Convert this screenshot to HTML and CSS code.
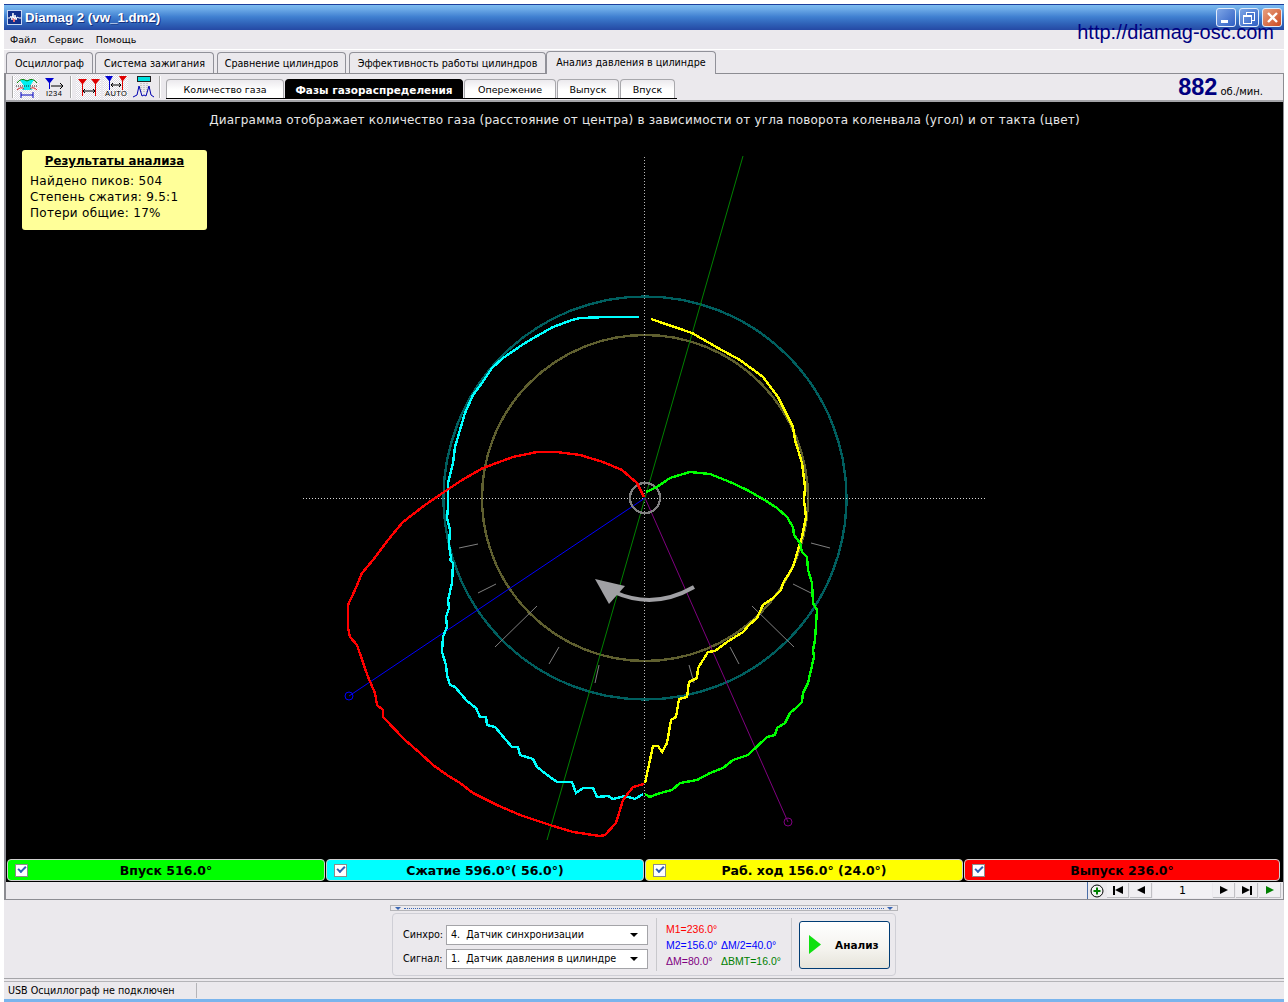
FILE: index.html
```html
<!DOCTYPE html>
<html lang="ru">
<head>
    <meta charset="UTF-8">
    <title>Diamag 2 (vw_1.dm2)</title>
    <link rel="stylesheet" href="styles.css">
</head>
<body>
<div class="window">

    <!-- title bar -->
    <div class="titlebar">
        <svg class="app-icon" width="15" height="15" viewBox="0 0 15 15">
            <rect x="0.5" y="0.5" width="14" height="14" fill="#12308c" stroke="#c8d8f4"/>
            <polyline points="1,8 3,8 4,6 5,10 6,3 7,12 8,5 9,10 10,7 12,8 14,8" fill="none" stroke="#fff"/>
            <polyline points="6,8 7,12 8,9" fill="none" stroke="#f06060"/>
        </svg>
        <span class="app-title">Diamag 2 (vw_1.dm2)</span>
        <div class="win-buttons">
            <div class="win-btn"><span class="glyph-min"></span></div>
            <div class="win-btn"><span class="glyph-restore"></span></div>
            <div class="win-btn win-close">
                <svg width="13" height="13" viewBox="0 0 13 13"><path d="M2 2 L11 11 M11 2 L2 11" stroke="#fff" stroke-width="2.4"/></svg>
            </div>
        </div>
    </div>
    <a class="site-link">http://diamag-osc.com</a>

    <!-- menu -->
    <div class="menu">
        <span>Файл</span>
        <span>Сервис</span>
        <span>Помощь</span>
    </div>

    <!-- main tabs -->
    <div class="tabs">
        <div class="tab">Осциллограф</div>
        <div class="tab tab-second">Система зажигания</div>
        <div class="tab">Сравнение цилиндров</div>
        <div class="tab">Эффективность работы цилиндров</div>
        <div class="tab tab-active">Анализ давления в цилиндре</div>
    </div>

    <div class="pane">
        <!-- toolbar -->
        <div class="toolbar">
            <div class="tool-sep"></div>
            <div class="tool-btn tool-pressed tool-first">
                <svg width="24" height="24" viewBox="0 0 24 24">
                    <path d="M5 5 H19 L15 11 L17 15 H7 L9 11 Z" fill="#00f0f0"/>
                    <path d="M2 8 Q6 2 12 6 Q18 2 22 8" fill="none" stroke="#008000"/>
                    <path d="M1 11 H23" stroke="#202020" stroke-dasharray="1 1"/>
                    <path d="M2 15 Q6 11 9 14 M15 14 Q18 11 22 15" fill="none" stroke="#e02020"/>
                    <path d="M6 20 H18 M6 17 V23 M18 17 V23" stroke="#0000c0" fill="none"/>
                </svg>
            </div>
            <div class="tool-btn tool-wide">
                <svg width="24" height="24" viewBox="0 0 24 24">
                    <path d="M3 3 H12 L8 8 V14 H7 V8 Z" fill="#0000d0"/>
                    <path d="M9 11 H21 M18 8 L21 11 L18 14" stroke="#000" fill="none"/>
                    <text x="4" y="21" class="tool-text">I234</text>
                </svg>
            </div>
            <div class="tool-sep tool-sep-mid"></div>
            <div class="tool-btn tool-pressed">
                <svg width="24" height="24" viewBox="0 0 24 24">
                    <path d="M1 4 H10 L6 9 V21 H5 V9 Z M14 4 H23 L19 9 V21 H18 V9 Z" fill="#e00000"/>
                    <path d="M6 16 H18" stroke="#000"/>
                    <path d="M8 14 L6 16 L8 18 M16 14 L18 16 L16 18" stroke="#000" fill="none"/>
                </svg>
            </div>
            <div class="tool-btn tool-pressed">
                <svg width="24" height="24" viewBox="0 0 24 24">
                    <path d="M1 1 H9 L6 6 V15 H5 V6 Z" fill="#0000d0"/>
                    <path d="M15 1 H23 L19 6 V15 H18 V6 Z" fill="#e00000"/>
                    <path d="M7 10 H17 M9 8 L7 10 L9 12 M15 8 L17 10 L15 12" stroke="#000" fill="none"/>
                    <text x="1" y="21" class="tool-text">AUTO</text>
                </svg>
            </div>
            <div class="tool-btn">
                <svg width="24" height="24" viewBox="0 0 24 24">
                    <rect x="6.5" y="1.5" width="13" height="5" fill="#00e0e0" stroke="#202020"/>
                    <path d="M10 8 V18 M13 8 V18 M16 8 V18" stroke="#a0a0a0" stroke-dasharray="1 1"/>
                    <path d="M2 22 L6 20 L8 11 L11 21 L13 20 L15 21 L18 11 L20 20 L23 22" fill="none" stroke="#0000b0"/>
                </svg>
            </div>
            <div class="tool-sep tool-sep-end"></div>
            <div class="subtabs">
                <div class="subtab">Количество газа</div>
                <div class="subtab subtab-active">Фазы газораспределения</div>
                <div class="subtab">Опережение</div>
                <div class="subtab">Выпуск</div>
                <div class="subtab">Впуск</div>
            </div>
            <div class="rpm"><b>882</b><span>об./мин.</span></div>
        </div>

        <!-- chart -->
        <div class="chart">
            <svg class="chart-svg" width="1277" height="755" viewBox="6 102 1277 755">
                <g fill="none" stroke-width="2.4" shape-rendering="crispEdges">
                    <circle cx="645" cy="498" r="201.5" stroke="#005f5f"/>
                    <circle cx="645" cy="498" r="163" stroke="#5f5f2f"/>
                </g>
                <g stroke="#808080" stroke-width="1">
                    <line x1="459" y1="548" x2="478" y2="544"/>
                    <line x1="478" y1="593" x2="496" y2="584"/>
                    <line x1="495" y1="647" x2="537" y2="606"/>
                    <line x1="549" y1="664" x2="559" y2="647"/>
                    <line x1="595" y1="683" x2="599" y2="665"/>
                    <line x1="689" y1="665" x2="694" y2="683"/>
                    <line x1="730" y1="647" x2="739" y2="664"/>
                    <line x1="752" y1="606" x2="794" y2="647"/>
                    <line x1="793" y1="584" x2="811" y2="593"/>
                    <line x1="811" y1="543" x2="830" y2="548"/>
                </g>
                <g stroke-dasharray="1 2">
                    <line x1="303" y1="498.5" x2="985" y2="498.5" stroke="#d8d8d8"/>
                    <line x1="644.5" y1="157" x2="644.5" y2="840" stroke="#b8b8b8"/>
                </g>
                <g fill="none" stroke-width="1">
                    <line x1="743" y1="156" x2="547" y2="840" stroke="#008000"/>
                    <line x1="645" y1="498" x2="349" y2="696" stroke="#0000ff"/>
                    <circle cx="349" cy="696" r="4" stroke="#0000ff"/>
                    <line x1="645" y1="498" x2="788" y2="822" stroke="#800080"/>
                    <circle cx="788" cy="822" r="4" stroke="#800080"/>
                </g>
                <circle cx="645" cy="498" r="15" fill="none" stroke="#808080" stroke-width="2.4" shape-rendering="crispEdges"/>

                <!-- rotation arrow -->
                <path d="M694 587 Q654 610 614 592" fill="none" stroke="#a0a0a4" stroke-width="4"/>
                <polygon points="595,579 625,586 609,604" fill="#a0a0a4"/>

                <!-- stroke curves -->
                <g fill="none" stroke-width="2.4" shape-rendering="crispEdges">
                    <polyline stroke="#00ffff" points="639,317 608,317 580,318 572,320 553,327 537,336 522,345 503,358 492,368 482,383 473,395 465,413 460,430 455,447 453,463 448,483 448,507 447,518 450,530 449,545 451,558 450,560 453,563 452,583 448,600 449,608 446,617 447,627 443,637 442,652 446,665 447,675 450,685 455,687 467,701 476,708 480,717 486,717 487,725 495,727 512,747 518,747 520,755 533,759 537,767 550,777 557,782 572,782 576,793 583,788 593,788 597,797 608,796 613,799 625,796 635,799 643,794"/>
                    <polyline stroke="#ffff00" points="651,319 692,333 718,348 740,360 763,377 778,397 793,427 795,440 802,463 805,487 804,500 806,517 802,537 799,547 800,543 793,567 790,572 783,583 781,590 773,598 763,605 757,618 749,625 743,632 727,642 715,651 708,652 698,668 697,678 689,682 687,697 679,699 676,717 671,720 667,743 662,752 658,746 653,746 645,783"/>
                    <polyline stroke="#00ff00" points="646,492 657,487 670,478 690,472 710,474 730,482 747,490 763,499 777,508 787,517 793,527 794,535 800,543 802,552 807,557 808,570 812,583 813,603 817,610 815,640 813,650 814,657 808,683 803,693 802,702 797,707 790,713 785,723 777,728 775,735 767,737 748,755 733,760 723,768 710,773 697,780 680,783 672,790 657,794 650,797 645,794"/>
                    <polyline stroke="#ff0000" points="644,497 637,483 622,470 603,462 580,455 557,452 537,452 513,457 483,468 462,480 447,490 425,505 403,522 392,535 382,548 373,560 362,573 355,590 348,605 348,628 350,637 357,645 368,677 375,693 377,705 383,710 383,717 405,740 420,753 433,765 447,775 460,783 473,793 497,805 520,815 550,825 573,832 600,836 605,835 616,823 623,800 633,787 644,784"/>
                </g>
            </svg>

            <div class="chart-caption">Диаграмма отображает количество газа (расстояние от центра) в зависимости от угла поворота коленвала (угол) и от такта (цвет)</div>

            <div class="results">
                <div class="results-title">Результаты анализа</div>
                <div>Найдено пиков: 504</div>
                <div>Степень сжатия: 9.5:1</div>
                <div>Потери общие: 17%</div>
            </div>
        </div>

        <!-- stroke chips -->
        <div class="chips">
            <div class="chip chip-green"><span class="check"></span><span>Впуск 516.0°</span></div>
            <div class="chip chip-cyan"><span class="check"></span><span>Сжатие 596.0°( 56.0°)</span></div>
            <div class="chip chip-yellow"><span class="check"></span><span>Раб. ход 156.0° (24.0°)</span></div>
            <div class="chip chip-red"><span class="check"></span><span>Выпуск 236.0°</span></div>
        </div>

        <!-- frame navigation -->
        <div class="nav">
            <div class="nav-plus">
                <svg width="14" height="14" viewBox="0 0 14 14">
                    <circle cx="7" cy="7" r="6" fill="#f4f4f4" stroke="#000"/>
                    <path d="M3.5 7 H10.5 M7 3.5 V10.5" stroke="#008000" stroke-width="2"/>
                </svg>
            </div>
            <div class="nav-btn"><span class="bar"></span><span class="tri-left"></span></div>
            <div class="nav-btn"><span class="tri-left"></span></div>
            <div class="nav-num">1</div>
            <div class="nav-btn"><span class="tri-right"></span></div>
            <div class="nav-btn"><span class="tri-right"></span><span class="bar"></span></div>
            <div class="nav-btn"><span class="tri-right tri-green"></span></div>
        </div>
    </div>

    <!-- bottom panel -->
    <div class="bottom">
        <div class="splitter"><span class="split-tri"></span><span class="split-dots"></span><span class="split-tri"></span></div>
        <div class="panel">
            <div class="combos">
                <div class="combo-row">
                    <label>Синхро:</label>
                    <div class="combo"><span>4.&nbsp; Датчик синхронизации</span><i></i></div>
                </div>
                <div class="combo-row">
                    <label>Сигнал:</label>
                    <div class="combo"><span>1.&nbsp; Датчик давления в цилиндре</span><i></i></div>
                </div>
            </div>
            <div class="readout">
                <span class="c-red">M1=236.0°</span><span></span>
                <span class="c-blue">M2=156.0°</span><span class="c-blue">ΔM/2=40.0°</span>
                <span class="c-purple">ΔM=80.0°</span><span class="c-green">ΔBMT=16.0°</span>
            </div>
            <div class="analyze">
                <svg width="12" height="19" viewBox="0 0 12 19"><polygon points="0,0 12,9.5 0,19" fill="#10e010"/></svg>
                <b>Анализ</b>
            </div>
        </div>
    </div>

    <!-- status bar -->
    <div class="status">
        <div class="status-text">USB Осциллограф не подключен</div>
        <div class="status-rest"></div>
    </div>
</div>
<div class="desktop-edge"></div>
</body>
</html>
```

FILE: styles.css
```css
html, body {
    margin: 0;
    padding: 0;
}

body {
    width: 1288px;
    height: 1002px;
    overflow: hidden;
    background: #fff;
    font-family: "Liberation Sans", Arial, sans-serif;
    font-size: 11px;
    color: #000;
}

.window {
    position: relative;
    width: 1280px;
    height: 995px;
    margin: 4px 4px 0;
    background: #ebe9ed;
    display: flex;
    flex-direction: column;
}

/* title bar */
.titlebar {
    height: 26px;
    box-sizing: border-box;
    border-top: 1px solid #1c3f9c;
    padding: 0 2px 0 3px;
    display: flex;
    align-items: center;
    background: linear-gradient(#7dbcf0 0, #6aa8e6 18%, #3f7fd0 48%, #2f62b8 75%, #2549a4 100%);
}

.app-icon {
    margin-right: 3px;
}

.app-title {
    color: #fff;
    font-size: 13.3px;
    font-weight: bold;
    text-shadow: 1px 1px 0 #16307c;
}

.win-buttons {
    margin-left: auto;
    display: flex;
    gap: 3px;
}

.win-btn {
    width: 20px;
    height: 19px;
    box-sizing: border-box;
    border: 1px solid #e4ecfa;
    border-radius: 3px;
    background: linear-gradient(135deg, #7ea6e6, #2f5fc4);
    display: flex;
    align-items: center;
    justify-content: center;
    position: relative;
}

.win-close {
    background: linear-gradient(135deg, #e8a080, #cc4a20);
}

.glyph-min {
    width: 7px;
    height: 3px;
    background: #fff;
    margin-top: 8px;
    margin-right: 3px;
}

.glyph-restore {
    width: 7px;
    height: 6px;
    border: 1px solid #fff;
    border-top-width: 2px;
    margin-top: 3px;
    margin-right: 3px;
    box-shadow: 3px -3px 0 -1px #4a78d0, 3px -3px 0 0 #fff;
}

.site-link {
    position: absolute;
    right: 10px;
    top: 17px;
    font-size: 20px;
    line-height: 23px;
    color: #000080;
}

/* menu */
.menu {
    height: 19px;
    border-bottom: 1px solid #fff;
    padding-left: 6px;
    display: flex;
    align-items: center;
    gap: 12px;
    font-family: "DejaVu Sans", sans-serif;
    font-size: 9.5px;
}

/* tabs */
.tabs {
    height: 24px;
    margin-bottom: -1px;
    padding-left: 2px;
    display: grid;
    grid-template-columns: 87px 118px 129px 197px 167px;
    column-gap: 3px;
    align-items: end;
    position: relative;
    z-index: 1;
    font-family: "DejaVu Sans", sans-serif;
    font-size: 9.6px;
}

.tab {
    height: 21px;
    margin-bottom: 1px;
    box-sizing: border-box;
    border: 1px solid #919199;
    border-bottom: 0;
    border-radius: 4px 4px 0 0;
    background: #ebe9ed;
    display: flex;
    align-items: center;
    justify-content: center;
}

.tab-second {
    margin-left: -1px;
}

.tab-active {
    height: 23px;
    margin-left: -3px;
    margin-bottom: 0;
    padding-bottom: 2px;
}

/* everything bordered below the tabs */
.pane {
    border: 1px solid #8c8c92;
    border-left-width: 2px;
    border-bottom-width: 1px;
}

/* toolbar */
.toolbar {
    height: 26px;
    border-bottom: 2px solid #a4a4a8;
    padding-left: 6px;
    padding-right: 20px;
    display: flex;
    align-items: center;
}

.tool-sep {
    width: 0;
    height: 22px;
    border-left: 1px solid #a8a8a8;
    border-right: 1px solid #fff;
}

.tool-sep-mid {
    margin: 0 4px 0 3px;
}

.tool-sep-end {
    margin: 0 5px 0 2px;
}

.tool-btn {
    width: 25px;
    height: 25px;
    margin-right: 2px;
    display: flex;
    align-items: center;
    justify-content: center;
}

.tool-wide {
    width: 27px;
    margin-right: 0;
}

.tool-first {
    margin-right: 1px;
}

.tool-pressed {
    background: repeating-conic-gradient(#fff 0 25%, #dddbe2 0 50%) 0 0 / 2px 2px;
}

.tool-text {
    font-family: "Liberation Sans", Arial, sans-serif;
    font-size: 7.5px;
    letter-spacing: 0.4px;
    fill: #000;
}

.subtabs {
    align-self: flex-end;
    height: 20px;
    margin-bottom: 1px;
    box-sizing: border-box;
    border-bottom: 1px solid #000;
    padding-right: 2px;
    display: grid;
    grid-template-columns: 118px 178px 92px 62px 55px;
    column-gap: 1px;
    font-family: "DejaVu Sans", sans-serif;
    font-size: 9.5px;
}

.subtab {
    padding-top: 1px;
    border: 1px solid #a8a8ac;
    border-bottom: 0;
    border-radius: 4px 4px 0 0;
    background: linear-gradient(#ebe9ed, #fff 55%);
    display: flex;
    align-items: center;
    justify-content: center;
}

.subtab-active {
    background: #000;
    border-color: #000;
    color: #fff;
    font-size: 10.5px;
    font-weight: bold;
}

.rpm {
    margin-left: auto;
    padding-top: 1px;
    display: flex;
    align-items: baseline;
    gap: 3px;
    font-family: "DejaVu Sans", sans-serif;
    font-size: 10px;
}

.rpm b {
    font-family: "Liberation Sans", Arial, sans-serif;
    font-size: 23.5px;
    color: #000080;
}

/* chart */
.chart {
    position: relative;
    height: 755px;
    background: #000;
    overflow: hidden;
}

.chart-svg {
    position: absolute;
    left: 0;
    top: 0;
}

.chart-caption {
    position: relative;
    padding-top: 11px;
    line-height: 14px;
    text-align: center;
    color: #e8e8e8;
    font-family: "DejaVu Sans", sans-serif;
    font-size: 12px;
    letter-spacing: 0.2px;
}

.results {
    position: absolute;
    left: 16px;
    top: 48px;
    width: 185px;
    height: 80px;
    box-sizing: border-box;
    padding: 3px 8px;
    border-radius: 3px;
    background: #ffff99;
    font-family: "DejaVu Sans", sans-serif;
    font-size: 12px;
    letter-spacing: 0.3px;
    line-height: 16px;
}

.results-title {
    margin-bottom: 4px;
    text-align: center;
    font-weight: bold;
    font-size: 11.8px;
    text-decoration: underline;
    letter-spacing: 0;
}

/* chips */
.chips {
    height: 25px;
    box-sizing: border-box;
    padding: 2px 0 1px 1px;
    background: #000;
    display: grid;
    grid-template-columns: repeat(3, 318px) 316px;
    column-gap: 1px;
    font-family: "DejaVu Sans", sans-serif;
    font-size: 12.5px;
    font-weight: bold;
}

.chip {
    border: 1px solid #cfcfcf;
    border-radius: 4px;
    padding: 0 7px;
    display: grid;
    grid-template-columns: 1fr auto 1fr;
    align-items: center;
}

.chip span:last-child {
    grid-column: 2;
}

.chip-green { background: #00ff00; }
.chip-cyan { background: #00ffff; }
.chip-yellow { background: #ffff00; }
.chip-red { background: #ff0000; }

.check {
    width: 11px;
    height: 11px;
    border: 1px solid #8c8c8c;
    background: #fff;
    position: relative;
}

.check::after {
    content: '';
    position: absolute;
    left: 2px;
    top: 1px;
    width: 6px;
    height: 3px;
    border-left: 2px solid #2f5fb4;
    border-bottom: 2px solid #2f5fb4;
    transform: rotate(-45deg);
}

/* navigation row */
.nav {
    height: 17px;
    padding-right: 2px;
    display: flex;
    justify-content: flex-end;
    align-items: center;
    gap: 1px;
    font-family: "DejaVu Sans", sans-serif;
    font-size: 11px;
}

.nav-plus {
    height: 17px;
    padding: 0 2px;
    border-left: 1px solid #4a6ea8;
    display: flex;
    align-items: center;
}

.nav-btn {
    width: 22px;
    height: 15px;
    box-sizing: border-box;
    border-right: 1px solid #c0c0c4;
    border-bottom: 1px solid #c0c0c4;
    background: #f0eff2;
    display: flex;
    align-items: center;
    justify-content: center;
}

.nav-num {
    width: 59px;
    height: 15px;
    text-align: center;
    line-height: 16px;
    background: #f2f1f4;
}

.bar {
    width: 2px;
    height: 9px;
    background: #000;
}

.tri-left {
    border-top: 4.5px solid transparent;
    border-bottom: 4.5px solid transparent;
    border-right: 8px solid #000;
}

.tri-right {
    border-top: 4.5px solid transparent;
    border-bottom: 4.5px solid transparent;
    border-left: 8px solid #000;
}

.tri-green {
    border-left-color: #008000;
}

/* bottom panel */
.bottom {
    height: 79px;
    box-sizing: border-box;
    border-bottom: 1px solid #a4a4a8;
    padding-top: 5px;
    display: flex;
    flex-direction: column;
    align-items: center;
}

.splitter {
    width: 508px;
    height: 6px;
    box-sizing: border-box;
    border: 1px solid #b4b4b8;
    padding: 0 4px;
    display: flex;
    align-items: center;
    gap: 3px;
}

.split-tri {
    border-left: 3px solid transparent;
    border-right: 3px solid transparent;
    border-top: 3px solid #3a66b4;
}

.split-dots {
    flex: 1;
    border-top: 1px dotted #3a66b4;
}

.panel {
    width: 504px;
    height: 63px;
    margin-top: 2px;
    box-sizing: border-box;
    border: 1px solid #cfcfd6;
    border-radius: 4px;
    padding: 0 5px 0 10px;
    display: flex;
    align-items: center;
}

.combos {
    display: flex;
    flex-direction: column;
    gap: 4px;
    padding-top: 4px;
    padding-right: 8px;
    font-family: "DejaVu Sans", sans-serif;
    font-size: 9.6px;
}

.combo-row {
    display: flex;
    align-items: center;
}

.combo-row label {
    width: 43px;
}

.combo {
    width: 202px;
    height: 20px;
    box-sizing: border-box;
    border: 1px solid #a4a4a8;
    background: #fff;
    padding: 0 9px 0 4px;
    display: flex;
    align-items: center;
    justify-content: space-between;
}

.combo i {
    border-left: 4px solid transparent;
    border-right: 4px solid transparent;
    border-top: 4px solid #000;
}

.readout {
    align-self: stretch;
    margin: 4px 0;
    border-left: 1px solid #c8c8cc;
    border-right: 1px solid #c8c8cc;
    padding: 2px 4px 0 9px;
    width: 136px;
    box-sizing: border-box;
    display: grid;
    grid-template-columns: 55px 1fr;
    align-content: center;
    row-gap: 3px;
    line-height: 13px;
    font-size: 10.5px;
    white-space: nowrap;
}

.c-red { color: #ff0000; }
.c-blue { color: #0000ff; }
.c-purple { color: #800080; }
.c-green { color: #008000; }

.analyze {
    width: 91px;
    height: 48px;
    margin-left: 7px;
    box-sizing: border-box;
    border: 1px solid #003c74;
    border-radius: 3px;
    padding-left: 9px;
    background: linear-gradient(#fff, #f4f3ee 60%, #e6e4da);
    display: flex;
    align-items: center;
    gap: 14px;
    font-family: "DejaVu Sans", sans-serif;
    font-size: 10.5px;
}

/* status bar */
.status {
    height: 18px;
    box-sizing: border-box;
    border-top: 1px solid #b4b4b8;
    margin-top: 2px;
    display: flex;
    align-items: center;
    font-family: "DejaVu Sans", sans-serif;
    font-size: 9.6px;
}

.status-text {
    width: 192px;
    padding-left: 4px;
    box-sizing: border-box;
}

.status-rest {
    flex: 1;
    height: 15px;
    border-left: 1px solid #b4b4b8;
}

.desktop-edge {
    height: 3px;
    margin: 0 4px;
    background: #7ab4ec;
}
```
